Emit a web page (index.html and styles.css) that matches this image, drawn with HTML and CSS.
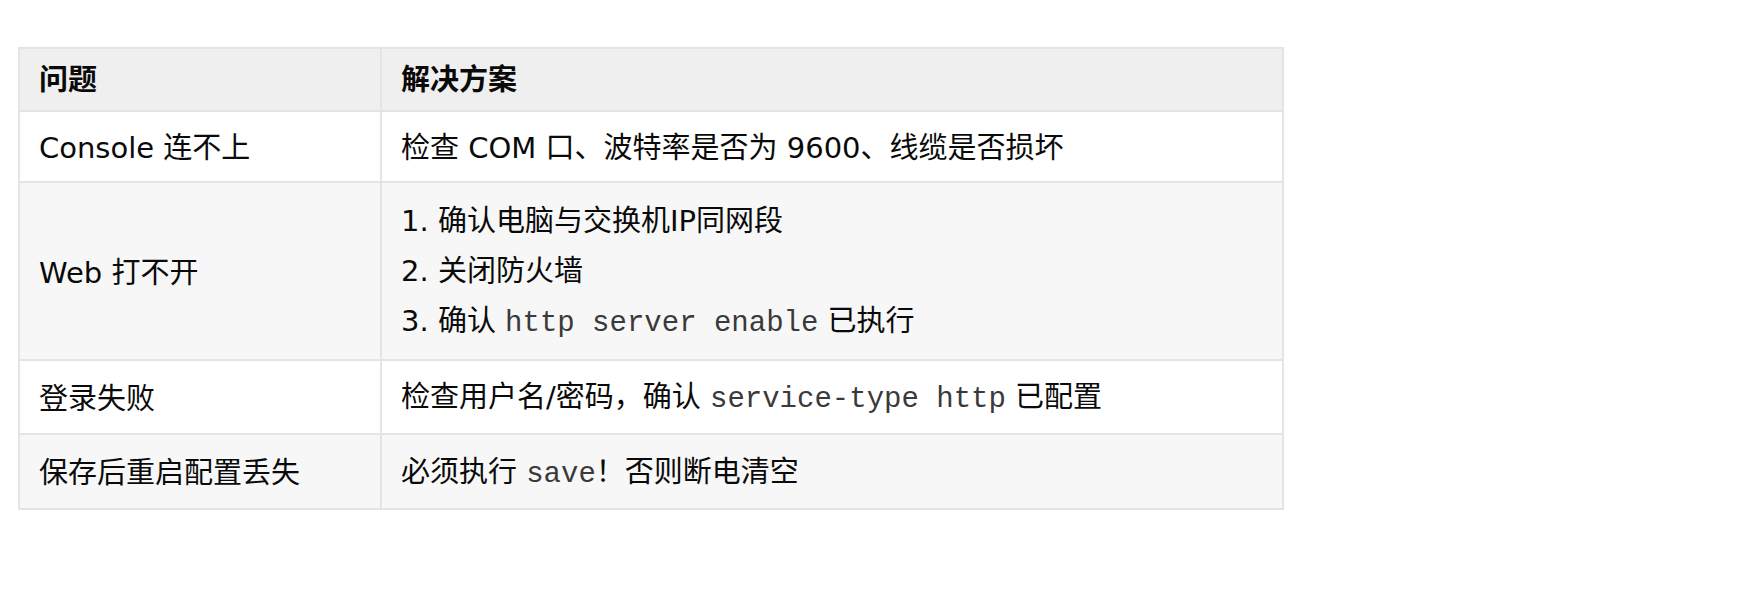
FILE: index.html
```html
<!DOCTYPE html>
<html lang="zh-CN">
<head>
<meta charset="utf-8">
<title>常见问题</title>
<link rel="stylesheet" href="styles.css">
</head>
<body>
<div class="page">
  <table class="faq">
    <colgroup>
      <col class="col-q">
      <col class="col-a">
    </colgroup>
    <thead>
      <tr>
        <th>问题</th>
        <th>解决方案</th>
      </tr>
    </thead>
    <tbody>
      <tr class="r1">
        <td>Console 连不上</td>
        <td>检查 COM 口、波特率是否为 9600、线缆是否损坏</td>
      </tr>
      <tr class="r2 alt">
        <td>Web 打不开</td>
        <td>
          <div class="line">1. 确认电脑与交换机IP同网段</div>
          <div class="line">2. 关闭防火墙</div>
          <div class="line">3. 确认 <code>http server enable</code> 已执行</div>
        </td>
      </tr>
      <tr class="r3">
        <td>登录失败</td>
        <td>检查用户名/密码，确认 <code>service-type http</code> 已配置</td>
      </tr>
      <tr class="r4 alt">
        <td>保存后重启配置丢失</td>
        <td>必须执行 <code>save</code>！否则断电清空</td>
      </tr>
    </tbody>
  </table>
</div>
</body>
</html>
```

FILE: styles.css
```css
html, body {
  margin: 0;
  padding: 0;
  background: #ffffff;
}

.page {
  padding: 47px 0 0 18px;
}

.faq {
  width: 1266px;
  table-layout: fixed;
  border-collapse: collapse;
  font-family: "DejaVu Sans", "Noto Sans CJK SC", sans-serif;
  font-size: 29px;
  color: #0a0a0a;
  border: 2px solid #e4e4e4;
}

.col-q {
  width: 362px;
}

.faq th,
.faq td {
  border: 2px solid #e4e4e4;
  text-align: left;
  vertical-align: middle;
  padding: 0 19px;
  line-height: 44px;
}

.faq th {
  background: #efefef;
  font-weight: 700;
  height: 61px;
}

.faq td {
  height: 66px;
  padding-top: 3px;
}

.faq tr.alt td {
  background: #f7f7f7;
}

.faq tr.r2 td {
  height: 173px;
}

.faq tr.r3 td {
  height: 69px;
}

.faq tr.r4 td {
  height: 70px;
}

.line {
  line-height: 50px;
}

code {
  font-family: "Liberation Mono", "Courier New", monospace;
  font-size: 29px;
  color: #3a3a3a;
}
```
